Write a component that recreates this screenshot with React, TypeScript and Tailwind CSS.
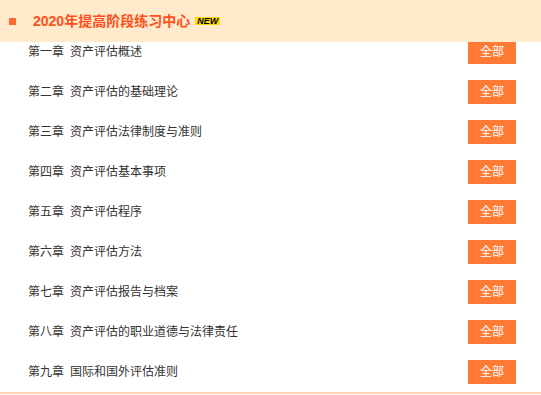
import React from "react";

const chapters = [
  ["第一章", "资产评估概述"],
  ["第二章", "资产评估的基础理论"],
  ["第三章", "资产评估法律制度与准则"],
  ["第四章", "资产评估基本事项"],
  ["第五章", "资产评估程序"],
  ["第六章", "资产评估方法"],
  ["第七章", "资产评估报告与档案"],
  ["第八章", "资产评估的职业道德与法律责任"],
  ["第九章", "国际和国外评估准则"],
];

export default function App() {
  return (
    <div
      className="w-[541px] h-[395px] bg-white overflow-hidden"
      style={{ fontFamily: '"Liberation Sans", "Noto Sans CJK SC", sans-serif' }}
    >
      <div className="relative z-10 h-[42px] bg-[#ffebcb] flex items-center">
        <span className="ml-[9px] w-[7px] h-[7px] bg-[#ff6a2f]" />
        <span className="ml-[17px] text-[14px] font-bold text-[#ff501c] leading-none">
          2020年提高阶段练习中心
        </span>
        <span className="ml-[5px] px-[2px] bg-[#ffd700] text-black text-[9px] font-bold italic leading-[8px] rounded-[1px]">
          NEW
        </span>
      </div>
      <ul className="-mt-[2px] flex flex-col gap-4 pb-2 border-b-2 border-[#ffd3b2]">
        {chapters.map(([c, t]) => (
          <li key={c} className="h-6 flex items-center justify-between pl-7 pr-[25px]">
            <span className="text-[12px] text-[#333333] leading-none">
              {c}
              <span className="ml-[6px]">{t}</span>
            </span>
            <span className="w-12 h-6 bg-[#ff7a35] text-white text-[12px] flex items-center justify-center">
              全部
            </span>
          </li>
        ))}
      </ul>
    </div>
  );
}
